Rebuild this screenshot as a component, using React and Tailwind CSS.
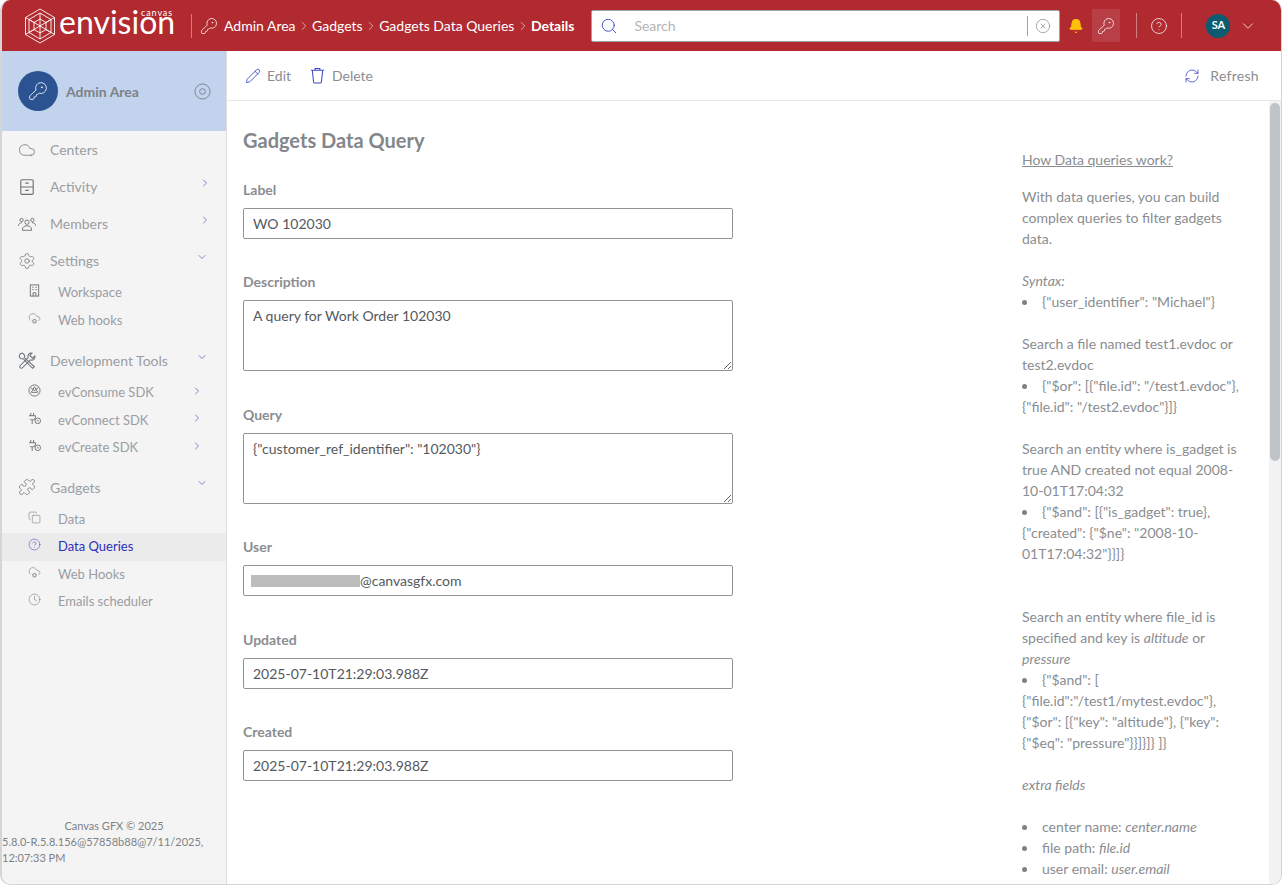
import {
  Bell, ChevronDown, ChevronRight, CircleHelp, CircleX, Clock, Cloud, CloudCog, Copy,
  KeyRound, Pencil, Puzzle, RefreshCw, Search, Settings,
} from "lucide-react"

function Logo() {
  return (
    <svg width="32" height="36" viewBox="0 0 32 36" fill="none" stroke="white" strokeWidth="0.9">
      <path d="M16 1 L30.5 9.5 V26.5 L16 35 L1.5 26.5 V9.5 Z" />
      <path d="M16 5 L27 11.5 V24.5 L16 31 L5 24.5 V11.5 Z" />
      <path d="M5 11.5 L27 24.5 M27 11.5 L5 24.5 M16 5 V31" />
      <path d="M10 14.5 L16 11 L22 14.5 V21.5 L16 25 L10 21.5 Z" />
      <path d="M1.5 9.5 L10 14.5 M30.5 9.5 L22 14.5 M1.5 26.5 L10 21.5 M30.5 26.5 L22 21.5" />
    </svg>
  )
}

function Cabinet({ className }) {
  return (
    <svg className={className} viewBox="0 0 16 16" fill="none" stroke="currentColor" strokeWidth="1">
      <rect x="2.5" y="1.5" width="11" height="13" rx="1" />
      <path d="M2.5 8h11M6.5 4.5h3M6.5 11h3" />
    </svg>
  )
}

function People({ className }) {
  return (
    <svg className={className} viewBox="0 0 20 16" fill="none" stroke="currentColor" strokeWidth="1">
      <circle cx="10" cy="6" r="2.4" />
      <path d="M5 15v-1.5c0-2 2-3.5 5-3.5s5 1.500 5 3.500V15z" />
      <circle cx="4" cy="3.5" r="1.8" />
      <circle cx="16" cy="3.500" r="1.800" />
      <path d="M0.500 10c0-2 1.500-3.500 4-3.500M19.500 10c0-2-1.500-3.500-4-3.500" />
    </svg>
  )
}

function Tools({ className }) {
  return (
    <svg className={className} viewBox="0 0 16 16" fill="none" stroke="currentColor" strokeWidth="0.9">
      <path d="M2 1.500 L4 1 L6 3 L5.500 5 L14.500 13 L13 14.500 L4.500 6 L2.500 6 L1 4z" />
      <path d="M15 3.500 a3 3 0 0 1 -4 3.500 L4 14 a1.400 1.400 0 0 1 -2 -2 L9 5 a3 3 0 0 1 3.500 -4 L10.500 3 L13 5.500z" />
    </svg>
  )
}

function Building({ className }) {
  return (
    <svg className={className} viewBox="0 0 14 14" fill="none" stroke="currentColor" strokeWidth="1">
      <rect x="2.500" y="1" width="9" height="12" />
      <path d="M4.500 3.500h1.500M8 3.500h1.500M4.500 6h1.500M8 6h1.500M5.500 13v-3.500h3V13" />
    </svg>
  )
}

function Consume({ className }) {
  return (
    <svg className={className} viewBox="0 0 14 14" fill="none" stroke="currentColor" strokeWidth="1">
      <circle cx="7" cy="7" r="6" />
      <path d="M7 3 L10.500 9 H3.500 Z M7 7 L3 4 M7 7 L11 4" />
    </svg>
  )
}

function PlugSmall({ className }) {
  return (
    <svg className={className} viewBox="0 0 14 14" fill="none" stroke="currentColor" strokeWidth="1">
      <path d="M3 1v3M6 1v3M1 4h7v1.500a3 3 0 0 1-3 3h-1a3 3 0 0 1-2-1M4.500 8.500V13" />
      <circle cx="10.500" cy="9.500" r="3" />
      <path d="M9.500 9.500h2" />
    </svg>
  )
}

function Bucket({ className }) {
  return (
    <svg className={className} viewBox="0 0 16 18" fill="none" stroke="currentColor" strokeWidth="1.1">
      <path d="M1 3.500h14M5.500 3.500V1.500h5v2" />
      <path d="M2.500 3.500 L3.800 16 a1 1 0 0 0 1 0.900h6.400a1 1 0 0 0 1-0.900 L13.500 3.500" />
    </svg>
  )
}

function Target({ className }) {
  return (
    <svg className={className} viewBox="0 0 18 18" fill="none" stroke="currentColor" strokeWidth="1">
      <circle cx="9" cy="9" r="8" />
      <circle cx="9" cy="9" r="3" />
    </svg>
  )
}

function NavItem({ icon: Icon, label, arrow }) {
  return (
    <div className="flex h-[37px] items-center">
      <div className="flex w-[48px] justify-center pl-[2px] text-[#6b7075]">
        <Icon className="h-[18px] w-[18px]" strokeWidth={1} />
      </div>
      <span className="text-[14px] text-[#9a9ea3]">{label}</span>
      {arrow === "right" && <ChevronRight className="ml-auto mr-[15px] mb-2 h-3 w-3 text-[#5a62c4]" strokeWidth={1.5} />}
      {arrow === "down" && <ChevronDown className="ml-auto mr-[18px] mb-2 h-3 w-3 text-[#5a62c4]" strokeWidth={1.5} />}
    </div>
  )
}

function SubItem({ icon: Icon, label, arrow, active }) {
  return (
    <div className={`flex h-[27.5px] items-center ${active ? "bg-[#ebebeb]" : ""}`}>
      <div className={`flex w-[56px] justify-start pb-1 pl-[26px] ${active ? "text-[#3b3fc0]" : "text-[#6b7075]"}`}>
        <Icon className="h-[13px] w-[13px]" strokeWidth={1} />
      </div>
      <span className={`text-[13px] ${active ? "text-[#2f2fb8]" : "text-[#9a9ea3]"}`}>{label}</span>
      {arrow && <ChevronRight className="ml-auto mr-[23px] mb-1 h-3 w-3 text-[#5a62c4]" strokeWidth={1.5} />}
    </div>
  )
}

function Sidebar() {
  return (
    <aside className="flex w-[225px] shrink-0 flex-col border-r border-[#dddddd] bg-[#f4f4f4]">
      <div className="flex h-[80px] items-center bg-[#c2d3ee] pl-[16px] pr-[15px]">
        <div className="flex h-[40px] w-[40px] items-center justify-center rounded-full bg-[#2c5391]">
          <KeyRound className="h-[20px] w-[20px] text-white" strokeWidth={1} />
        </div>
        <span className="ml-[8px] text-[14px] font-bold text-[#7d8287]">Admin Area</span>
        <Target className="ml-auto h-[17px] w-[17px] text-[#7d8287]" />
      </div>
      <nav>
        <NavItem icon={Cloud} label="Centers" />
        <NavItem icon={Cabinet} label="Activity" arrow="right" />
        <NavItem icon={People} label="Members" arrow="right" />
        <NavItem icon={Settings} label="Settings" arrow="down" />
        <SubItem icon={Building} label="Workspace" />
        <SubItem icon={CloudCog} label="Web hooks" />
        <div className="h-[8px]" />
        <NavItem icon={Tools} label="Development Tools" arrow="down" />
        <SubItem icon={Consume} label="evConsume SDK" arrow />
        <SubItem icon={PlugSmall} label="evConnect SDK" arrow />
        <SubItem icon={PlugSmall} label="evCreate SDK" arrow />
        <div className="h-[7px]" />
        <NavItem icon={Puzzle} label="Gadgets" arrow="down" />
        <SubItem icon={Copy} label="Data" />
        <SubItem icon={CircleHelp} label="Data Queries" active />
        <SubItem icon={CloudCog} label="Web Hooks" />
        <SubItem icon={Clock} label="Emails scheduler" />
      </nav>
      <footer className="mt-auto pb-[18px] text-[11px] leading-[16px] text-[#7d8287]">
        <div className="text-center">Canvas GFX © 2025</div>
        <div>5.8.0-R.5.8.156@57858b88@7/11/2025,</div>
        <div>12:07:33 PM</div>
      </footer>
    </aside>
  )
}

function Header() {
  return (
    <header className="flex h-[51px] shrink-0 items-center bg-[#b02a30] text-white">
      <div className="ml-[22px] shrink-0">
        <Logo />
      </div>
      <div className="mb-[12px] ml-[3px] flex w-[114px] shrink-0 flex-col">
        <span className="self-end text-[9px] leading-[5px] tracking-[0.9px]">canvas</span>
        <span className="text-[32px] leading-[14px]">envision</span>
      </div>
      <div className="ml-[18px] h-[24px] w-px bg-white/40" />
      <KeyRound className="ml-[8px] h-[18px] w-[18px]" strokeWidth={1} />
      <nav className="ml-[6px] flex items-center text-[14px]">
        <span>Admin Area</span>
        <ChevronRight className="mx-[1.25px] h-[14px] w-[14px]" strokeWidth={1} />
        <span>Gadgets</span>
        <ChevronRight className="mx-[1.25px] h-[14px] w-[14px]" strokeWidth={1} />
        <span>Gadgets Data Queries</span>
        <ChevronRight className="mx-[1.25px] h-[14px] w-[14px]" strokeWidth={1} />
        <span className="font-bold">Details</span>
      </nav>
      <div className="ml-[17px] flex h-[32px] w-[469px] shrink-0 items-center rounded-[2px] border border-[#9ca3af] bg-white">
        <Search className="ml-[8px] h-[18px] w-[18px] text-[#3b46c4]" strokeWidth={1.2} />
        <span className="ml-[16px] text-[14px] text-[#b4b4b4]">Search</span>
        <div className="ml-auto h-[20px] w-px bg-[#9ca3af]" />
        <CircleX className="ml-[7px] mr-[8px] h-[16px] w-[16px] text-[#7d8287]" strokeWidth={1} />
      </div>
      <Bell className="ml-[8px] h-[16px] w-[16px] fill-[#ffc107] text-[#ffc107]" strokeWidth={1.5} />
      <div className="ml-[8px] flex h-[33px] w-[28px] items-center justify-center rounded-[2px] bg-white/10">
        <KeyRound className="h-[18px] w-[18px]" strokeWidth={1} />
      </div>
      <div className="ml-[16px] h-[25px] w-px bg-white/40" />
      <CircleHelp className="ml-[13px] h-[18px] w-[18px]" strokeWidth={1} />
      <div className="ml-[13px] h-[25px] w-px bg-white/40" />
      <div className="ml-[24px] flex h-[24px] w-[24px] items-center justify-center rounded-full bg-[#0b5c72] text-[11px] font-bold">SA</div>
      <ChevronDown className="ml-[9px] h-[18px] w-[18px]" strokeWidth={1} />
    </header>
  )
}

function Toolbar() {
  return (
    <div className="flex h-[50px] shrink-0 items-center border-b border-[#e8e8e8] pl-[18px] pr-[17px] text-[14px] text-[#8a8d91]">
      <Pencil className="h-[16px] w-[16px] text-[#3b46c4]" strokeWidth={1.3} />
      <span className="ml-[6px]">Edit</span>
      <Bucket className="ml-[19px] h-[17px] w-[15px] text-[#3b46c4]" />
      <span className="ml-[7px]">Delete</span>
      <RefreshCw className="ml-auto h-[16px] w-[16px] text-[#3b46c4]" strokeWidth={1.2} />
      <span className="ml-[10px] mr-[5px] tracking-[0.3px]">Refresh</span>
    </div>
  )
}

function Field({ label, children }) {
  return (
    <div className="mb-[34.5px]">
      <label className="mb-[10px] block text-[14px] font-bold leading-[17px] text-[#8a8d91]">{label}</label>
      {children}
    </div>
  )
}

const boxCls = "block w-[490px] rounded-[2px] border border-[#8f9499] bg-white px-[9px] font-[Lato,sans-serif] text-[14px] text-[#55595e] outline-none"

function TextInput({ value }) {
  return <input readOnly value={value} className={`${boxCls} h-[31px]`} />
}

function TextBox({ value }) {
  return <textarea readOnly value={value} className={`${boxCls} h-[71px] py-[4px] leading-[21px]`} />
}

function Form() {
  return (
    <div className="w-[780px] shrink-0 pl-[16px]">
      <h1 className="mb-[26.75px] mt-[25px] text-[20px] font-bold leading-[28px] text-[#83878c]">Gadgets Data Query</h1>
      <Field label="Label"><TextInput value="WO 102030" /></Field>
      <Field label="Description"><TextBox value="A query for Work Order 102030" /></Field>
      <Field label="Query"><TextBox value={'{"customer_ref_identifier": "102030"}'} /></Field>
      <Field label="User">
        <div className={`${boxCls} flex h-[31px] items-center !pl-[7px]`}>
          <span className="h-[12px] w-[109px] bg-[#bdbdbd]" />
          <span>@canvasgfx.com</span>
        </div>
      </Field>
      <Field label="Updated"><TextInput value="2025-07-10T21:29:03.988Z" /></Field>
      <Field label="Created"><TextInput value="2025-07-10T21:29:03.988Z" /></Field>
    </div>
  )
}

function Bullets({ items }) {
  return (
    <ul className="list-inside list-disc [&_li::marker]:text-[#7d8287]">
      {items.map((item, i) => <li key={i}>{item}</li>)}
    </ul>
  )
}

function Help() {
  return (
    <div className="ml-[15px] w-[224px] shrink-0 pt-[48px] text-[14px] leading-[21px] text-[#8a8d91]">
      <a className="underline">How Data queries work?</a>
      <p className="mt-[16px]">With data queries, you can build complex queries to filter gadgets data.</p>
      <br />
      <p><em>Syntax:</em></p>
      <Bullets items={['{"user_identifier": "Michael"}']} />
      <br />
      <p>Search a file named test1.evdoc or test2.evdoc</p>
      <Bullets items={['{"$or": [{"file.id": "/test1.evdoc"}, {"file.id": "/test2.evdoc"}]}']} />
      <br />
      <p>Search an entity where is_gadget is true AND created not equal 2008-10-01T17:04:32</p>
      <Bullets items={['{"$and": [{"is_gadget": true}, {"created": {"$ne": "2008-10-01T17:04:32"}}]}']} />
      <br />
      <br />
      <p>Search an entity where file_id is specified and key is <em>altitude</em> or <em>pressure</em></p>
      <Bullets items={['{"$and": [ {"file.id":"/test1/mytest.evdoc"}, {"$or": [{"key": "altitude"}, {"key": {"$eq": "pressure"}}]}]} ]}']} />
      <br />
      <p><em>extra fields</em></p>
      <br />
      <Bullets items={[
        <>center name: <em>center.name</em></>,
        <>file path: <em>file.id</em></>,
        <>user email: <em>user.email</em></>,
      ]} />
    </div>
  )
}

export default function App() {
  return (
    <div className="h-[886px] w-[1283px] overflow-hidden bg-white font-[Lato,sans-serif]">
      <div className="flex h-[885px] w-[1282px] flex-col overflow-hidden rounded-[10px] border-b border-l-2 border-r border-[#d5d5d5]">
        <Header />
        <div className="flex min-h-0 flex-1">
          <Sidebar />
          <main className="flex min-w-0 flex-1 flex-col">
            <Toolbar />
            <div className="flex min-h-0 flex-1">
              <div className="flex min-w-0 flex-1 overflow-hidden">
                <Form />
                <Help />
              </div>
              <div className="w-[12px] shrink-0 bg-[#f1f2f3] px-[1px] pt-[2px]">
                <div className="h-[358px] rounded-[5px] bg-[#c1c4c7]" />
              </div>
            </div>
          </main>
        </div>
      </div>
    </div>
  )
}
